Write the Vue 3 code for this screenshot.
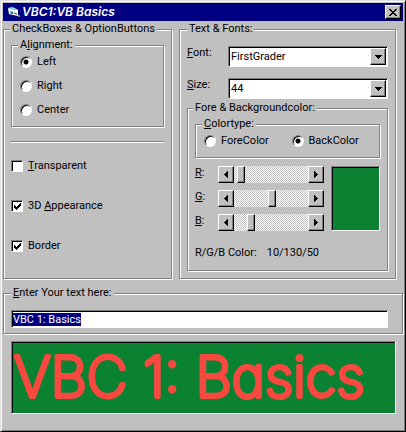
<script setup>
import { computed, onMounted, reactive, ref } from 'vue'

const alignments = ['Left', 'Right', 'Center']
const alignment = ref('Left')
const transparent = ref(false)
const appearance = ref(true)
const border = ref(true)
const font = ref('FirstGrader')
const size = ref('44')
const colorType = ref('BackColor')
const text = ref('VBC 1: Basics')
const textInput = ref(null)

const channels = reactive([
  { key: 'R', value: 10 },
  { key: 'G', value: 130 },
  { key: 'B', value: 50 },
])
const colorText = computed(() => channels.map((c) => c.value).join('/'))
const colorCss = computed(() => `rgb(${channels.map((c) => c.value).join(', ')})`)

function step(channel, delta) {
  channel.value = Math.min(255, Math.max(0, channel.value + delta))
}

onMounted(() => {
  textInput.value.focus()
  textInput.value.select()
})
</script>

<template>
  <main class="window">
    <header class="titlebar">
      <svg class="app-icon" width="14" height="14" viewBox="0 0 14 14" aria-hidden="true">
        <path d="M1 3l5 1 5 1v6l-5-1-4-1z" fill="#fff" />
        <path d="M1 3l4-1 3 1 3 2-5 0z" fill="#7fd8e8" />
        <path d="M3 6l3 1v2l-2 0z" fill="#008080" />
        <path d="M7 8l3 1" stroke="#303030" fill="none" />
        <path d="M11 10h2v2h-2z" fill="#808080" />
      </svg>
      <h1 class="title">VBC1:VB Basics</h1>
      <button type="button" class="raised close" aria-label="Close">
        <svg width="8" height="7" viewBox="0 0 8 7" shape-rendering="crispEdges">
          <path d="M0 0h2v1h1v1h2v-1h1v-1h2v1h-1v1h-1v1h-1v1h1v1h1v1h1v1h-2v-1h-1v-1h-2v1h-1v1h-2v-1h1v-1h1v-1h1v-1h-1v-1h-1v-1h-1z" />
        </svg>
      </button>
    </header>

    <div class="columns">
      <fieldset class="frame options">
        <legend>CheckBoxes &amp; OptionButtons</legend>
        <fieldset class="frame alignment">
          <legend>A<u>l</u>ignment:</legend>
          <label v-for="item in alignments" :key="item" class="choice">
            <input v-model="alignment" type="radio" name="alignment" :value="item" />{{ item }}
          </label>
        </fieldset>
        <hr />
        <div class="checks">
          <label class="choice"><input v-model="transparent" type="checkbox" /><span><u>T</u>ransparent</span></label>
          <label class="choice"><input v-model="appearance" type="checkbox" /><span>3D <u>A</u>ppearance</span></label>
          <label class="choice"><input v-model="border" type="checkbox" /><span>Border</span></label>
        </div>
      </fieldset>

      <fieldset class="frame fonts">
        <legend>Text &amp; Fonts:</legend>
        <div class="field">
          <label for="font"><u>F</u>ont:</label>
          <div class="combo">
            <select id="font" v-model="font"><option>FirstGrader</option></select>
            <span class="raised drop"><svg width="7" height="4" viewBox="0 0 7 4" shape-rendering="crispEdges"><path d="M0 0h7v1h-1v1h-1v1h-1v1h-1v-1h-1v-1h-1v-1h-1z" /></svg></span>
          </div>
        </div>
        <div class="field">
          <label for="size"><u>S</u>ize:</label>
          <div class="combo">
            <select id="size" v-model="size"><option>44</option></select>
            <span class="raised drop"><svg width="7" height="4" viewBox="0 0 7 4" shape-rendering="crispEdges"><path d="M0 0h7v1h-1v1h-1v1h-1v1h-1v-1h-1v-1h-1v-1h-1z" /></svg></span>
          </div>
        </div>

        <fieldset class="frame colors">
          <legend>Fore &amp; Backgroundcolor:</legend>
          <fieldset class="frame colortype">
            <legend><u>C</u>olortype:</legend>
            <label class="choice"><input v-model="colorType" type="radio" name="colortype" value="ForeColor" />ForeColor</label>
            <label class="choice"><input v-model="colorType" type="radio" name="colortype" value="BackColor" />BackColor</label>
          </fieldset>
          <div class="mixer">
            <div class="channels">
              <div v-for="c in channels" :key="c.key" class="channel">
                <label :for="'channel-' + c.key"><u>{{ c.key }}</u>:</label>
                <div class="scrollbar">
                  <button type="button" class="raised arrow" :aria-label="'Decrease ' + c.key" @click="step(c, -1)">
                    <svg width="4" height="7" viewBox="0 0 4 7" shape-rendering="crispEdges"><path d="M4 0v7h-1v-1h-1v-1h-1v-1h-1v-1h1v-1h1v-1h1v-1z" /></svg>
                  </button>
                  <input :id="'channel-' + c.key" v-model.number="c.value" type="range" min="0" max="255" />
                  <button type="button" class="raised arrow" :aria-label="'Increase ' + c.key" @click="step(c, 1)">
                    <svg width="4" height="7" viewBox="0 0 4 7" shape-rendering="crispEdges"><path d="M0 0v7h1v-1h1v-1h1v-1h1v-1h-1v-1h-1v-1h-1v-1z" /></svg>
                  </button>
                </div>
              </div>
            </div>
            <div class="sunken swatch" :style="{ backgroundColor: colorCss }"></div>
          </div>
          <p class="readout"><span>R/G/B Color:</span><output>{{ colorText }}</output></p>
        </fieldset>
      </fieldset>
    </div>

    <fieldset class="frame entry">
      <legend><label for="sample"><u>E</u>nter Your text here:</label></legend>
      <input id="sample" ref="textInput" v-model="text" class="sunken" type="text" />
    </fieldset>

    <div class="sunken preview" :style="{ backgroundColor: colorCss }">
      <svg width="100%" height="100%"><text x="2" y="55">{{ text }}</text></svg>
    </div>
  </main>
</template>

<style>
body {
  background: #c0c0c0;
}
</style>

<style scoped>
.window {
  box-sizing: border-box;
  min-height: 100vh;
  padding: 1px 1px 14px 1px;
  border: 1px solid #dfdfdf;
  border-right-color: #000;
  border-bottom-color: #000;
  box-shadow: inset 1px 1px 0 #fff, inset -1px -1px 0 #808080;
  background: #c0c0c0;
  color: #000;
  font: 11px/14px Roboto, "Liberation Sans", Arial, sans-serif;
}

.titlebar {
  display: flex;
  align-items: center;
  height: 18px;
  margin: 1px 1px 0;
  padding: 0 2px 0 4px;
  background: #000080;
}

.title {
  flex: 1;
  margin: 0 0 0 1px;
  color: #fff;
  font-family: Inter, "Liberation Sans", sans-serif;
  font-size: 12px;
  font-style: italic;
  font-weight: 600;
  line-height: 18px;
}

.raised {
  display: flex;
  align-items: center;
  justify-content: center;
  box-sizing: border-box;
  padding: 0;
  border: 1px solid;
  border-color: #fff #000 #000 #fff;
  border-radius: 0;
  box-shadow: inset -1px -1px 0 #808080;
  background: #c0c0c0;
}

.sunken {
  box-sizing: border-box;
  border: 1px solid;
  border-color: #808080 #fff #fff #808080;
  box-shadow: inset 1px 1px 0 #000;
}

.close {
  width: 16px;
  height: 14px;
}

.columns {
  display: grid;
  grid-template-columns: 169fr 217fr;
  gap: 7px;
  margin: 1px 8px 0 1px;
}

.frame {
  box-sizing: border-box;
  min-width: 0;
  margin: 0;
  border: 1px solid #808080;
  box-shadow: 1px 1px 0 #fff, inset 1px 1px 0 #fff;
}

legend {
  margin-left: -3px;
  padding: 0 2px;
  background: #c0c0c0;
}

.options {
  padding: 2px 7px 0;
}

.options > legend {
  margin-left: -1px;
}

.fonts {
  padding: 10px 7px 7px;
}

.fonts > legend {
  margin-left: 0;
}

.alignment {
  display: flex;
  flex-direction: column;
  gap: 10px;
  padding: 3px 8px 9px;
}

.alignment > legend,
.colors > legend,
.colortype > legend {
  margin-left: -2px;
}

.choice {
  display: flex;
  align-items: center;
  gap: 5px;
}

.choice input {
  appearance: none;
  flex: none;
  box-sizing: border-box;
  width: 12px;
  height: 12px;
  margin: 0;
  border: 1px solid;
  border-color: #808080 #fff #fff #808080;
  box-shadow: inset 1px 1px 0 #000;
  background: #fff;
}

.choice input[type='radio'] {
  border-radius: 50%;
}

.choice input[type='radio']:checked {
  background: radial-gradient(circle at 5px 5px, #000 2px, #fff 3px);
}

.choice input[type='checkbox']:checked {
  background: #fff url("data:image/svg+xml,%3Csvg xmlns='http://www.w3.org/2000/svg' width='7' height='7' shape-rendering='crispEdges'%3E%3Cpath d='M0 2h1v1h1v1h1v-1h1v-1h1v-1h1v-1h1v3h-1v1h-1v1h-1v1h-1v1h-1v-1h-1v-1h-1z'/%3E%3C/svg%3E") 2px 2px no-repeat;
}

hr {
  height: 1px;
  margin: 14px 0 0;
  border: 0;
  border-top: 1px solid #808080;
  background: #fff;
}

.checks {
  display: flex;
  flex-direction: column;
  gap: 26px;
  margin-top: 16px;
}

.field {
  display: grid;
  grid-template-columns: 41px 1fr;
  margin-bottom: 11px;
}

.combo {
  position: relative;
}

.combo select {
  appearance: none;
  display: block;
  box-sizing: border-box;
  width: 100%;
  height: 21px;
  padding: 0 20px 0 2px;
  border: 1px solid;
  border-color: #808080 #fff #fff #808080;
  border-radius: 0;
  box-shadow: inset 1px 1px 0 #000;
  background: #fff;
  color: #000;
  font: inherit;
}

.drop {
  position: absolute;
  top: 2px;
  right: 2px;
  bottom: 2px;
  width: 16px;
  pointer-events: none;
}

.colors {
  margin-top: -9px;
  padding: 2px 7px 10px;
}

.colortype {
  display: grid;
  grid-template-columns: 1fr 1fr;
  padding: 3px 0 9px 8px;
}

.mixer {
  display: grid;
  grid-template-columns: minmax(0, 1fr) 49px;
  gap: 7px;
  margin-top: 8px;
}

.channels {
  display: grid;
  gap: 7px;
}

.channel {
  display: grid;
  grid-template-columns: 23px minmax(0, 1fr);
}

.scrollbar {
  display: flex;
  height: 17px;
  background: repeating-conic-gradient(#fff 0 25%, #c0c0c0 0 50%) 0 0 / 2px 2px;
}

.arrow {
  flex: none;
  width: 16px;
}

.scrollbar input {
  appearance: none;
  flex: 1;
  min-width: 0;
  height: 17px;
  margin: 0;
  background: transparent;
}

.scrollbar input::-webkit-slider-thumb {
  appearance: none;
  box-sizing: border-box;
  width: 8px;
  height: 17px;
  border: 1px solid;
  border-color: #fff #000 #000 #fff;
  box-shadow: inset -1px -1px 0 #808080;
  background: #c0c0c0;
}

.readout {
  display: flex;
  gap: 10px;
  margin: 15px 0 0;
}

.entry {
  margin: 7px 1px 0;
  padding: 10px 14px 5px 7px;
}

.entry > legend {
  margin-left: 0;
}

.entry input {
  display: block;
  width: 100%;
  height: 18px;
  padding: 0 1px;
  border-radius: 0;
  outline: 0;
  background: #fff;
  color: #000;
  font: inherit;
}

.entry input::selection {
  background: #000080;
  color: #fff;
}

.preview {
  height: 73px;
  margin: 7px 8px 0 9px;
}

.preview svg {
  display: block;
}

.preview text {
  fill: #f84840;
  stroke: #f84840;
  stroke-width: 4px;
  stroke-linecap: round;
  stroke-linejoin: round;
  font-family: Inter, Lato, sans-serif;
  font-feature-settings: "cv11";
  font-size: 56px;
  font-weight: 200;
}
</style>
